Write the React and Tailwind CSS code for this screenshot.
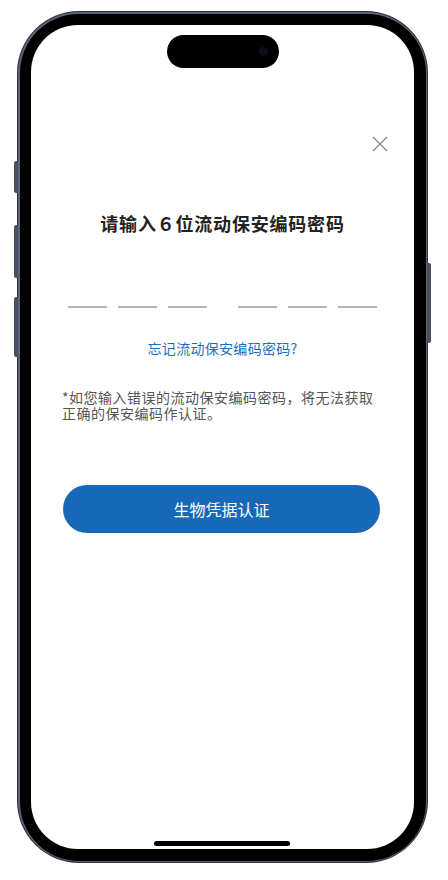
import { X } from "lucide-react";

const font = { fontFamily: '"Noto Sans CJK SC", "Noto Sans", sans-serif' };

function CodeLines() {
  const seg = "w-[39px] h-[1.5px] bg-[#b4b4b4]";
  return (
    <div className="flex justify-center items-center">
      <div className="flex gap-[11px]">
        <div className={seg} />
        <div className={seg} />
        <div className={seg} />
      </div>
      <div className="w-[31px]" />
      <div className="flex gap-[11px]">
        <div className={seg} />
        <div className={seg} />
        <div className={seg} />
      </div>
    </div>
  );
}

export default function App() {
  return (
    <div className="w-[448px] h-[880px] bg-white pl-[17px] pt-[11px]" style={font}>
      <div className="relative w-[411px] h-[852px]">
        {/* side buttons */}
        <div className="absolute left-[-3px] top-[150px] w-[4px] h-[32px] rounded-l-[2px] bg-[#4a5061]" />
        <div className="absolute left-[-3px] top-[214px] w-[4px] h-[53px] rounded-l-[2px] bg-[#4a5061]" />
        <div className="absolute left-[-3px] top-[286px] w-[4px] h-[60px] rounded-l-[2px] bg-[#4a5061]" />
        <div className="absolute right-[-3px] top-[252px] w-[4px] h-[80px] rounded-r-[2px] bg-[#4a5061]" />

        <div className="w-full h-full rounded-[62px] bg-[#2b303d] p-[1px]">
          <div className="w-full h-full rounded-[61px] bg-[#5d6374] p-[1.5px]">
            <div className="w-full h-full rounded-[59px] bg-black p-[11.5px]">
              <div className="relative w-full h-full rounded-[47px] bg-white overflow-hidden flex flex-col">
                {/* dynamic island */}
                <div className="relative mt-[10px] mx-auto w-[112px] h-[33px] rounded-full bg-black">
                  <div className="absolute right-[11px] top-[12px] w-[9px] h-[9px] rounded-full bg-[#0d0f1a]" />
                </div>

                <div className="flex justify-end pr-[21px] mt-[63px]">
                  <X size={26} strokeWidth={1.2} className="text-[#8a8a8a]" />
                </div>

                <h1 className="mt-[53px] text-center text-[18px] leading-[26px] font-bold tracking-[0.8px] text-[#222]">
                  请输入６位流动保安编码密码
                </h1>

                <div className="mt-[70px]">
                  <CodeLines />
                </div>

                <p className="mt-[30px] text-center text-[14px] leading-[20px] tracking-[0.3px] text-[#1d6fbd]">
                  忘记流动保安编码密码?
                </p>

                <p className="mt-[31px] px-[31px] text-[14px] leading-[16px] tracking-[0.5px] text-[#555]">
                  *如您输入错误的流动保安编码密码，将无法获取正确的保安编码作认证。
                </p>

                <button className="mt-[64px] ml-[32px] mr-[34px] h-[48px] rounded-full bg-[#1769b8] text-white text-[16px]">
                  生物凭据认证
                </button>

                <div className="absolute bottom-[3px] left-[123px] w-[136px] h-[5px] rounded-full bg-black" />
              </div>
            </div>
          </div>
        </div>
      </div>
    </div>
  );
}
